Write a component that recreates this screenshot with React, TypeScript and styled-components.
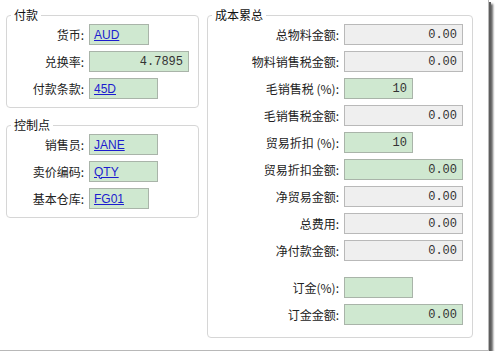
import React from "react";
import styled, { createGlobalStyle } from "styled-components";

const Global = createGlobalStyle`
  html, body { margin: 0; padding: 0; background: #ffffff; }
  body { font-family: "Noto Sans CJK SC", "Noto Sans", sans-serif; }
`;

const Frame = styled.div`
  width: 489px;
  height: 351px;
  background: #ffffff;
  box-sizing: border-box;
  border-right: 1px solid #b8b8b8;
  border-bottom: 1px solid #b8b8b8;
  box-shadow: 2px 2px 0 #5e5e5e, 4px 4px 2px rgba(0, 0, 0, 0.6);
  display: flex;
  align-items: flex-start;
  gap: 8px;
  padding: 8px 0 0 6px;
`;

const Column = styled.div`
  width: 193px;
  display: flex;
  flex-direction: column;
  gap: 10px;
`;

const Group = styled.fieldset<{ $w?: number; $bottom?: number; $right?: number }>`
  margin: 0;
  padding: 2px ${(p) => p.$right ?? 0}px ${(p) => p.$bottom ?? 8}px 0;
  border: 1px solid #d6d6d6;
  border-radius: 4px;
  min-width: 0;
  box-sizing: border-box;
  width: ${(p) => (p.$w ? `${p.$w}px` : "auto")};
`;

const Legend = styled.legend`
  margin-left: 4px;
  padding: 0 3px;
  font-size: 12px;
  line-height: 14px;
  color: #111;
`;

const Rows = styled.div<{ $label: number }>`
  display: grid;
  grid-template-columns: ${(p) => p.$label}px auto;
  column-gap: 5px;
  row-gap: 6px;
  align-items: center;
`;

const Label = styled.div<{ $spaced?: boolean }>`
  text-align: right;
  font-size: 12px;
  line-height: 21px;
  color: #222;
  white-space: nowrap;
  margin-top: ${(p) => (p.$spaced ? "10px" : "0")};
`;

const Box = styled.div<{ $w: number; $tone: "green" | "gray"; $spaced?: boolean }>`
  box-sizing: border-box;
  width: ${(p) => p.$w}px;
  height: 21px;
  border: 1px solid ${(p) => (p.$tone === "green" ? "#a9b4a9" : "#b9b9b9")};
  background: ${(p) => (p.$tone === "green" ? "#cfe8d0" : "#efefef")};
  display: flex;
  align-items: center;
  padding: 0 5px 0 4px;
  margin-top: ${(p) => (p.$spaced ? "10px" : "0")};
`;

const Link = styled.a`
  font-family: "Liberation Sans", Arial, sans-serif;
  font-size: 12px;
  color: #1c1ccf;
  text-decoration: underline;
`;

const Value = styled.span`
  margin-left: auto;
  font-family: "Liberation Mono", "Courier New", monospace;
  font-size: 12px;
  color: #333;
`;

type Field = {
  label: string;
  w: number;
  tone: "green" | "gray";
  link?: string;
  value?: string;
  spaced?: boolean;
};

const payFields: Field[] = [
  { label: "货币:", w: 60, tone: "green", link: "AUD" },
  { label: "兑换率:", w: 100, tone: "green", value: "4.7895" },
  { label: "付款条款:", w: 69, tone: "green", link: "45D" },
];

const ctrlFields: Field[] = [
  { label: "销售员:", w: 69, tone: "green", link: "JANE" },
  { label: "卖价编码:", w: 69, tone: "green", link: "QTY" },
  { label: "基本仓库:", w: 60, tone: "green", link: "FG01" },
];

const costFields: Field[] = [
  { label: "总物料金额:", w: 119, tone: "gray", value: "0.00" },
  { label: "物料销售税金额:", w: 119, tone: "gray", value: "0.00" },
  { label: "毛销售税 (%):", w: 69, tone: "green", value: "10" },
  { label: "毛销售税金额:", w: 119, tone: "gray", value: "0.00" },
  { label: "贸易折扣 (%):", w: 69, tone: "green", value: "10" },
  { label: "贸易折扣金额:", w: 119, tone: "green", value: "0.00" },
  { label: "净贸易金额:", w: 119, tone: "gray", value: "0.00" },
  { label: "总费用:", w: 119, tone: "gray", value: "0.00" },
  { label: "净付款金额:", w: 119, tone: "gray", value: "0.00" },
  { label: "订金(%):", w: 69, tone: "green", value: "", spaced: true },
  { label: "订金金额:", w: 119, tone: "green", value: "0.00" },
];

function FieldRows({ fields, label }: { fields: Field[]; label: number }) {
  return (
    <Rows $label={label}>
      {fields.map((f) => (
        <React.Fragment key={f.label}>
          <Label $spaced={f.spaced}>{f.label}</Label>
          <Box $w={f.w} $tone={f.tone} $spaced={f.spaced}>
            {f.link ? <Link href="#">{f.link}</Link> : <Value>{f.value}</Value>}
          </Box>
        </React.Fragment>
      ))}
    </Rows>
  );
}

export default function App() {
  return (
    <>
      <Global />
      <Frame>
        <Column>
          <Group>
            <Legend>付款</Legend>
            <FieldRows fields={payFields} label={77} />
          </Group>
          <Group>
            <Legend>控制点</Legend>
            <FieldRows fields={ctrlFields} label={77} />
          </Group>
        </Column>
        <Group $w={266} $bottom={12} $right={9}>
          <Legend>成本累总</Legend>
          <FieldRows fields={costFields} label={131} />
        </Group>
      </Frame>
    </>
  );
}
